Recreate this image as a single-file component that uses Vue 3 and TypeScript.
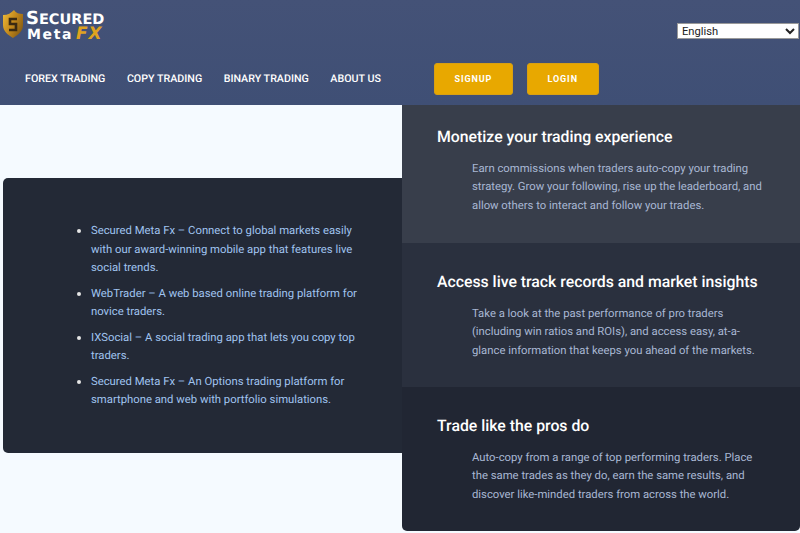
<script setup lang="ts">
const navLinks = ['FOREX TRADING', 'COPY TRADING', 'BINARY TRADING', 'ABOUT US']

const platforms = [
  'Secured Meta Fx – Connect to global markets easily with our award-winning mobile app that features live social trends.',
  'WebTrader – A web based online trading platform for novice traders.',
  'IXSocial – A social trading app that lets you copy top traders.',
  'Secured Meta Fx – An Options trading platform for smartphone and web with portfolio simulations.',
]

const features = [
  {
    title: 'Monetize your trading experience',
    text: 'Earn commissions when traders auto-copy your trading strategy. Grow your following, rise up the leaderboard, and allow others to interact and follow your trades.',
    tone: 'light',
  },
  {
    title: 'Access live track records and market insights',
    text: 'Take a look at the past performance of pro traders (including win ratios and ROIs), and access easy, at-a-glance information that keeps you ahead of the markets.',
    tone: 'mid',
  },
  {
    title: 'Trade like the pros do',
    text: 'Auto-copy from a range of top performing traders. Place the same trades as they do, earn the same results, and discover like-minded traders from across the world.',
    tone: 'dark',
  },
]
</script>

<template>
  <div class="page">
    <header class="header">
      <div class="top">
        <div class="logo">
          <svg class="shield" width="20" height="28" viewBox="0 0 20 28" aria-hidden="true">
            <defs>
              <linearGradient id="gold" x1="0" y1="0" x2="1" y2="0.6">
                <stop offset="0" stop-color="#f0bd3a" />
                <stop offset="0.55" stop-color="#c48a1c" />
                <stop offset="1" stop-color="#8a5f14" />
              </linearGradient>
            </defs>
            <path d="M11 0 C13 3 16 4 20 4 V15 C20 21 15 25 10 28 C5 25 0 21 0 15 V5 C5 5 8 3 11 0 Z" fill="url(#gold)" />
            <path d="M14 9 H7 V14 H13 V20 H6" fill="none" stroke="#3a2a12" stroke-width="2.6" />
          </svg>
          <div class="wordmark">
            <div class="secured"><span class="big">S</span>ECURED</div>
            <div class="meta">Meta<span class="fx">FX</span></div>
          </div>
        </div>
        <select class="lang">
          <option>English</option>
        </select>
      </div>
      <nav class="nav">
        <div class="links">
          <a v-for="link in navLinks" :key="link" class="link">{{ link }}</a>
        </div>
        <div class="buttons">
          <button class="btn signup">SIGNUP</button>
          <button class="btn login">LOGIN</button>
        </div>
      </nav>
    </header>

    <main class="main">
      <section class="left">
        <ul class="list">
          <li v-for="item in platforms" :key="item">{{ item }}</li>
        </ul>
      </section>
      <section class="right">
        <article v-for="f in features" :key="f.title" class="feature" :class="f.tone">
          <h3>{{ f.title }}</h3>
          <p>{{ f.text }}</p>
        </article>
      </section>
    </main>
  </div>
</template>

<style>
html, body { margin: 0; background: #f5faff; }
</style>

<style scoped>
.page { width: 800px; height: 533px; overflow: hidden; font-family: Roboto, sans-serif; background: #f5faff;
  text-rendering: geometricPrecision; }

.header { height: 105px; box-sizing: border-box; background: linear-gradient(#445277, #3f4f75); }
.top { height: 63px; display: flex; justify-content: space-between; }
.logo { display: flex; gap: 3px; padding: 10px 0 0 3px; }
.wordmark { font-family: "DejaVu Sans", sans-serif; font-weight: 700; color: #fff; line-height: 1; white-space: nowrap; }
.secured { font-size: 14.5px; height: 16px; }
.secured .big { font-size: 18px; }
.meta { font-size: 14px; letter-spacing: 1.6px; margin-left: 1px; }
.fx { color: #dfa21f; font-size: 17px; font-style: italic; letter-spacing: 1px; margin-left: 3px; }
.lang { width: 122px; height: 16px; margin: 23px 1px 0 0; font-family: Roboto, sans-serif; font-size: 11.2px;
  background: #fff; color: #222; border: 1px solid #999; border-radius: 0; padding: 0; }

.nav { display: flex; align-items: flex-start; }
.links { display: flex; gap: 21.5px; padding: 9px 0 0 25px; width: 434px; box-sizing: border-box; }
.link { color: #fff; font-size: 10.7px; font-weight: 500; line-height: 14px; white-space: nowrap; }
.buttons { display: flex; gap: 14px; }
.btn { height: 32px; box-sizing: border-box; background: #e8a800; color: #fff; border: 1px solid #d9a012; border-radius: 3px;
  font-family: Roboto, sans-serif; font-size: 9px; font-weight: 700; letter-spacing: 0.9px; padding: 0; }
.signup { width: 78.7px; }
.login { width: 72px; }

.main { display: flex; align-items: flex-start; }
.left { width: 399px; height: 275px; margin: 73px 0 0 3px; box-sizing: border-box; background: #232936;
  border-radius: 5px 0 0 5px; padding: 44px 45px 0 0; }
.list { margin: 0; padding: 0 0 0 88px; color: #a0c4f0; font-size: 11.3px; line-height: 18.5px; }
.list li { margin-bottom: 7px; }
.list li::marker { color: #e6e6e6; font-size: 13px; line-height: 1; }

.right { width: 398px; display: flex; flex-direction: column; border-radius: 0 0 5px 5px; overflow: hidden; }
.feature { padding: 29px 35px 0; box-sizing: border-box; height: 144px; }
.feature.light { background: #383e4b; height: 138px; padding-top: 22px; }
.feature.mid { background: #2a303e; }
.feature.dark { background: #212633; }
h3 { margin: 0 0 12.5px; color: #fff; font-size: 15.8px; font-weight: 500; line-height: 20px; }
p { margin: 0 0 0 35px; color: #a9b8d4; font-size: 11.3px; line-height: 18.5px; }
</style>
